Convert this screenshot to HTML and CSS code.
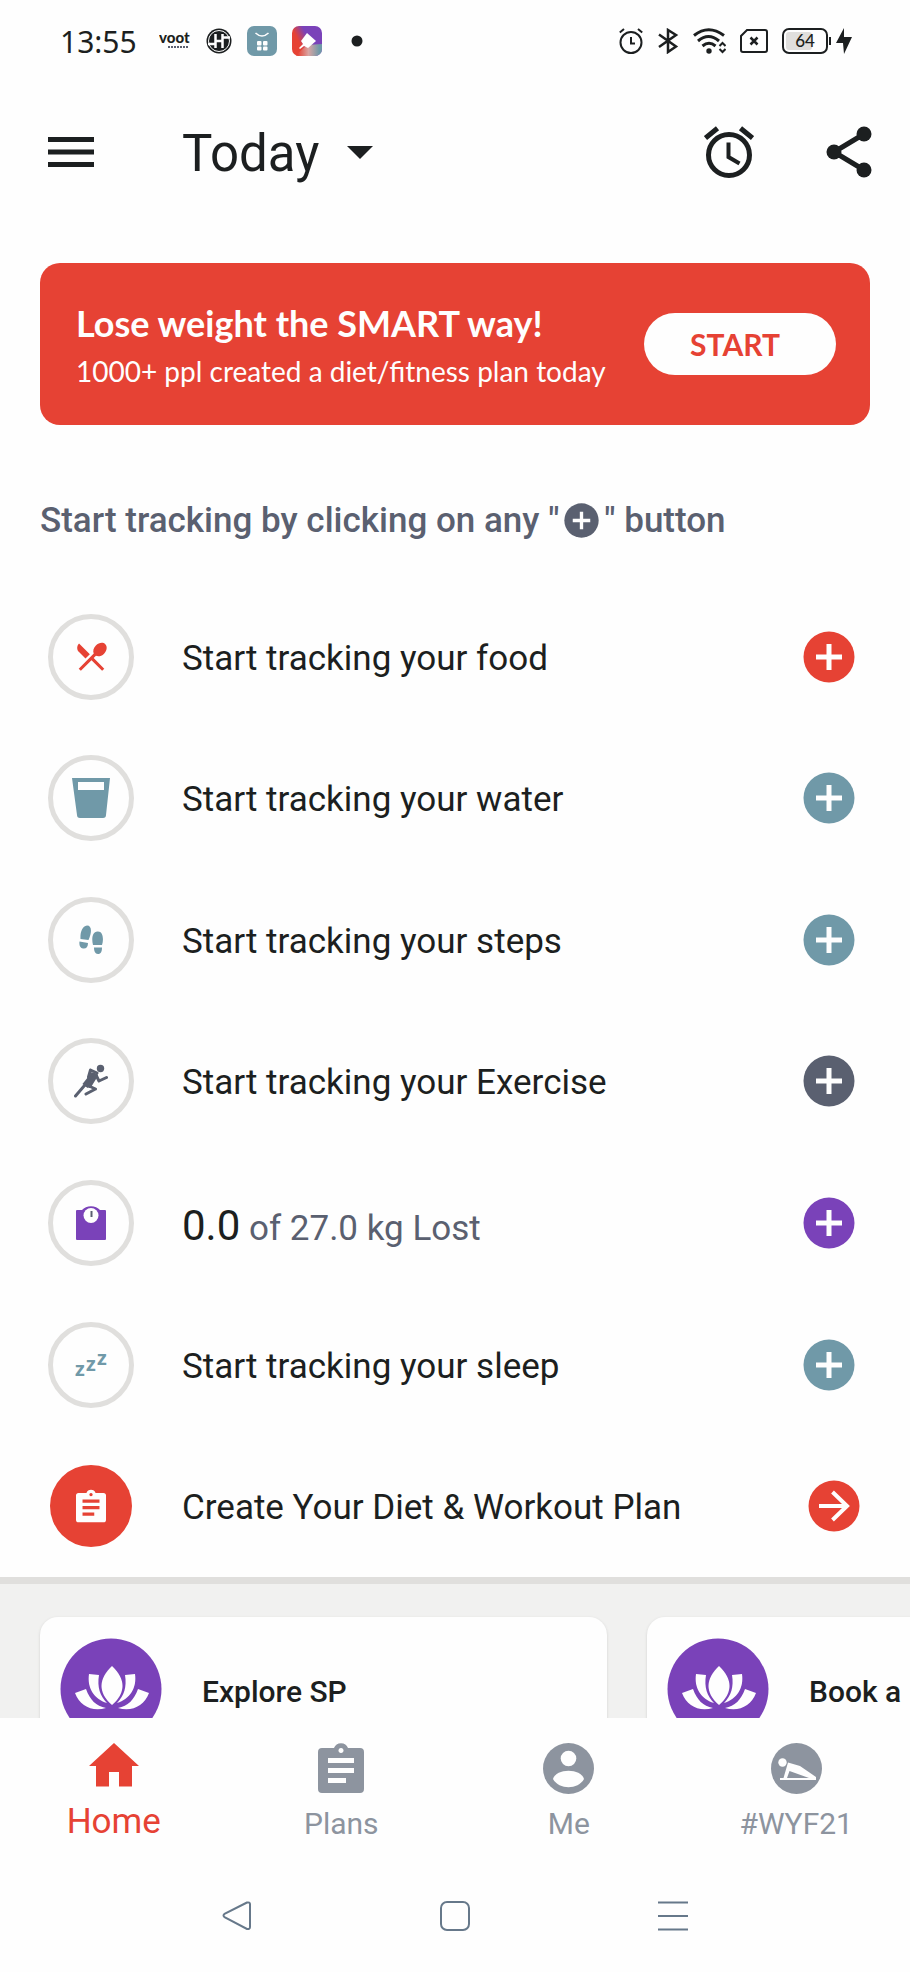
FILE: index.html
```html
<!DOCTYPE html>
<html lang="en">
<head>
<meta charset="utf-8">
<meta name="viewport" content="width=device-width, initial-scale=1">
<title>Today</title>
<link rel="stylesheet" href="styles.css">
</head>
<body>
<svg class="defs" aria-hidden="true">
  <symbol id="plus" viewBox="0 0 52 52">
    <circle cx="26" cy="26" r="25.5" fill="currentColor"/>
    <path d="M26 13v26M13 26h26" stroke="#fefefe" stroke-width="5"/>
  </symbol>
  <symbol id="lotus" viewBox="0 0 102 102">
    <circle cx="51" cy="51" r="50.5" fill="#7a42b9"/>
    <g fill="#fefefe">
      <path d="M52 28c14 13 14 27 0 39c-14-12-14-26 0-39z"/>
      <path d="M29 36l10 1c-2 12 1 21 8 28c-13-4-20-15-18-29z"/>
      <path d="M75 36l-10 1c2 12-1 21-8 28c13-4 20-15 18-29z"/>
      <path d="M15 55l11-4c4 11 10 17 20 19c-14 4-26-2-31-15z"/>
      <path d="M89 55l-11-4c-4 11-10 17-20 19c14 4 26-2 31-15z"/>
    </g>
  </symbol>
  <symbol id="clipboard" viewBox="0 0 46 50">
    <path fill="currentColor" fill-rule="evenodd" d="M4 5h12a7.500 7.500 0 0 1 14 0h12a4 4 0 0 1 4 4v37a4 4 0 0 1-4 4H4a4 4 0 0 1-4-4V9a4 4 0 0 1 4-4zM23 5a2.500 2.500 0 1 0 .01 0zM10 15v5h26v-5zM10 25v5h26v-5zM10 35v5h18v-5z"/>
  </symbol>
</svg>

<div class="screen">
  <div class="status">
    <span class="clock">13:55</span>
    <div class="notices">
      <svg width="32" height="28" viewBox="0 0 32 28"><text class="voot" x="0" y="16">voot</text><path d="M9 20h20" stroke="#5a6070" stroke-width="2" stroke-dasharray="2 1"/></svg>
      <svg width="26" height="26" viewBox="0 0 26 26"><circle cx="13" cy="13" r="12.500" fill="#1c1f20"/><circle cx="13" cy="13" r="10.500" fill="none" stroke="#fefefe"/><path d="M9.500 6v14M16.500 6v14M9.500 13h7M2 16h7.500M16.500 9.500H24" fill="none" stroke="#fefefe" stroke-width="2.500"/></svg>
      <svg width="30" height="30" viewBox="0 0 30 30"><rect width="30" height="30" rx="7" fill="#7099a8"/><path d="M8.500 7q6.500 6 13 0" fill="none" stroke="#fefefe" stroke-width="1.500"/><g fill="#fefefe"><rect x="10" y="15" width="4.500" height="4.500" rx="1"/><rect x="16" y="15" width="4.500" height="4.500" rx="1"/><rect x="10" y="20.500" width="4.500" height="4" rx="1"/><rect x="16" y="20.500" width="4.500" height="4" rx="1"/></g></svg>
      <svg width="30" height="30" viewBox="0 0 30 30">
        <defs>
          <linearGradient id="warm" x1="0" y1="0.700" x2="1" y2="0.200"><stop offset="0.250" stop-color="#e64234"/><stop offset="0.550" stop-color="#7a42b9"/></linearGradient>
          <linearGradient id="cool" x1="0" y1="0" x2="1" y2="0"><stop offset="0.100" stop-color="#e64234"/><stop offset="0.500" stop-color="#d9a5a3"/><stop offset="0.900" stop-color="#7099a8"/></linearGradient>
          <clipPath id="tile"><rect width="30" height="30" rx="7"/></clipPath>
        </defs>
        <g clip-path="url(#tile)"><path fill="url(#warm)" d="M0 0h30v30H0z"/><path fill="url(#cool)" d="M3 30l12-11 15-1v12z"/></g>
        <path fill="#fefefe" d="M15 7l9 8-8 7-4-2-4 3-1-1 4-4-2-3z"/></svg>
      <svg class="more" width="12" height="12" viewBox="0 0 12 12"><circle cx="6" cy="6" r="5.500" fill="#1c1f20"/></svg>
    </div>
    <div class="signals">
      <svg width="24" height="26" viewBox="0 0 24 26" fill="none" stroke="#1c1f20" stroke-width="2"><circle cx="12" cy="14.500" r="10.500"/><path d="M12 9v6.500h4M.8 4.500L5 1M23.200 4.500L19 1"/></svg>
      <svg width="22" height="26" viewBox="-1 0 22 26" fill="none" stroke="#1c1f20" stroke-width="2.500"><path d="M1 6.500l17 12-8 5.500V2l8 5-17 12"/></svg>
      <svg width="33" height="26" viewBox="0 0 33 26" fill="none" stroke="#1c1f20" stroke-width="3"><path d="M1 7.500q14.500-11.500 30 0M5 13q10.500-9 21 0M9.500 18q6.500-5.500 13 0"/><circle cx="16" cy="23" r="2.700" fill="#1c1f20" stroke="none"/><path d="M26.500 18l3-3 3 3M26.500 21l3 3 3-3" stroke-width="2"/></svg>
      <svg width="28" height="24" viewBox="0 0 28 24" fill="none" stroke="#1c1f20" stroke-width="2"><path d="M7 1h18a2 2 0 0 1 2 2v18a2 2 0 0 1-2 2H3a2 2 0 0 1-2-2V7z"/><path d="M10.500 8.500l7 7M17.500 8.500l-7 7" stroke-width="2.500"/></svg>
      <svg width="70" height="26" viewBox="0 0 70 26"><rect x="4" y="4" width="26" height="18" rx="3" fill="#e0dfdd"/><rect x="1" y="1" width="44" height="24" rx="6" fill="none" stroke="#1c1f20" stroke-width="2"/><path d="M48 9v8" stroke="#1c1f20" stroke-width="2"/><path d="M62 0l-8 15h7l1 11 8-17h-8z" fill="#1c1f20"/><text class="charge" x="23" y="19" text-anchor="middle">64</text></svg>
    </div>
  </div>

  <header class="appbar">
    <button class="icon-button" type="button" aria-label="Menu"><svg width="46" height="30" viewBox="0 0 46 30"><path d="M0 2.500h46M0 15h46M0 27.500h46" stroke="#1c1f20" stroke-width="5"/></svg></button>
    <button class="day" type="button"><span>Today</span><svg width="26" height="13" viewBox="0 0 26 13"><path d="M0 0h26L13 13z" fill="#1c1f20"/></svg></button>
    <button class="icon-button" type="button" aria-label="Reminders"><svg width="50" height="52" viewBox="0 0 50 52" fill="none" stroke="#1c1f20" stroke-width="5"><circle cx="25" cy="29" r="20.500"/><path d="M24.500 16.500V31l11 6.500" stroke-width="4"/><path d="M1.500 12L13.500 2.200M48.500 12L36.500 2.200"/></svg></button>
    <button class="icon-button" type="button" aria-label="Share"><svg width="46" height="52" viewBox="0 0 46 52"><path d="M38 8L8 26l30 18" fill="none" stroke="#1c1f20" stroke-width="5"/><g fill="#1c1f20"><circle cx="38" cy="8" r="7.500"/><circle cx="8" cy="26" r="7.500"/><circle cx="38" cy="44" r="7.500"/></g></svg></button>
  </header>

  <section class="banner">
    <div class="pitch">
      <h2>Lose weight the SMART way!</h2>
      <p>1000+ ppl created a diet/fitness plan today</p>
    </div>
    <button class="start" type="button">START</button>
  </section>

  <h1 class="hint">Start tracking by clicking on any "<svg width="35" height="35" role="img" aria-label="plus"><use href="#plus"/></svg>" button</h1>

  <ul class="trackers">
    <li class="tracker">
      <span class="ring"><svg width="37" height="37" viewBox="0 0 24 24"><path fill="#e64234" d="M8.100 13.340l2.830-2.830L3.910 3.500c-1.560 1.560-1.560 4.090 0 5.660l4.190 4.180zm6.780-1.810c1.530.71 3.680.21 5.270-1.380 1.910-1.910 2.280-4.650.81-6.120-1.460-1.460-4.200-1.100-6.120.81-1.590 1.590-2.090 3.740-1.380 5.270L3.700 19.870l1.410 1.410L12 14.410l6.880 6.880 1.410-1.410L13.410 13l1.470-1.470z"/></svg></span>
      <span class="label">Start tracking your food</span>
      <button class="add red" type="button" aria-label="Add food"><svg><use href="#plus"/></svg></button>
    </li>
    <li class="tracker">
      <span class="ring"><svg width="38" height="40" viewBox="0 0 38 40"><path fill="#7099a8" fill-rule="evenodd" d="M0 0h38l-4 37a3 3 0 0 1-3 3H8a3 3 0 0 1-3-3zM6 4v8h26V4z"/></svg></span>
      <span class="label">Start tracking your water</span>
      <button class="add teal" type="button" aria-label="Add water"><svg><use href="#plus"/></svg></button>
    </li>
    <li class="tracker">
      <span class="ring"><svg width="24" height="30" viewBox="0 0 24 30" fill="#7099a8"><path d="M1.500 14C1 8 3 1 8 .5c5 0 5 7 1.500 14.500zM.5 16.500l8.500 1.500c0 4-2 6-5 5.500S0 20 .5 16.500zM14 20c-1.500-6-1-13 4.500-13.500S25 14 23 20zM15 22.500h8c0 4-1 6.500-4 6.500s-4-3-4-6.500z"/></svg></span>
      <span class="label">Start tracking your steps</span>
      <button class="add teal" type="button" aria-label="Add steps"><svg><use href="#plus"/></svg></button>
    </li>
    <li class="tracker">
      <span class="ring"><svg width="34" height="34" viewBox="0 0 34 34" fill="none" stroke="#5a6070" stroke-width="3" stroke-linecap="round" stroke-linejoin="round"><circle cx="26.500" cy="4.500" r="3.700" fill="#5a6070" stroke="none"/><path d="M14.500 13l2-7 6.500 3M22 11l3 6 7.500-3.500M1.500 32l9-10.500M15 22l6.500 3-9.500 5"/><path d="M20.500 10L11 22" stroke-width="6.500" stroke-linecap="butt"/><path d="M20 9.500l3 2-7 11.500-5-2z" stroke-width="2" fill="#5a6070"/></svg></span>
      <span class="label">Start tracking your Exercise</span>
      <button class="add slate" type="button" aria-label="Add exercise"><svg><use href="#plus"/></svg></button>
    </li>
    <li class="tracker">
      <span class="ring"><svg width="30" height="34" viewBox="0 0 30 34"><path fill="#7a42b9" d="M1 4h5a11 9 0 0 1 18 0h5a1 1 0 0 1 1 1v28a1 1 0 0 1-1 1H1a1 1 0 0 1-1-1V5a1 1 0 0 1 1-1z"/><circle cx="15" cy="9.500" r="7.500" fill="#fefefe"/><path d="M15.500 5v6" stroke="#5a6070" stroke-width="2"/></svg></span>
      <span class="label"><strong>0.0</strong> of 27.0 kg Lost</span>
      <button class="add purple" type="button" aria-label="Add weight"><svg><use href="#plus"/></svg></button>
    </li>
    <li class="tracker">
      <span class="ring"><svg class="zzz" width="40" height="44" viewBox="0 0 40 44"><text x="4" y="33">z</text><text x="15" y="28">z</text><text x="26" y="22">z</text></svg></span>
      <span class="label">Start tracking your sleep</span>
      <button class="add teal" type="button" aria-label="Add sleep"><svg><use href="#plus"/></svg></button>
    </li>
    <li class="tracker">
      <span class="disc"><svg width="30" height="34"><use href="#clipboard"/></svg></span>
      <span class="label">Create Your Diet &amp; Workout Plan</span>
      <button class="add go" type="button" aria-label="Create plan"><svg viewBox="0 0 52 52"><circle cx="26" cy="26" r="25.500" fill="#e64234"/><path d="M11 26h27M24.500 12L39 26 24.500 40" fill="none" stroke="#fefefe" stroke-width="4"/></svg></button>
    </li>
  </ul>

  <section class="carousel">
    <a class="card" href="#explore"><svg><use href="#lotus"/></svg><span>Explore SP</span></a>
    <a class="card" href="#book"><svg><use href="#lotus"/></svg><span>Book a</span></a>
  </section>

  <nav class="tabs">
    <a class="tab active" href="#home"><svg width="50" height="44" viewBox="0 0 50 44"><path d="M25 0l25 23h-7v20.500H30V29H20v14.500H7V23H0z" fill="currentColor"/></svg><span>Home</span></a>
    <a class="tab" href="#plans"><svg width="46" height="50"><use href="#clipboard"/></svg><span>Plans</span></a>
    <a class="tab" href="#me"><svg width="51" height="51" viewBox="0 0 51 51"><circle cx="25.500" cy="25.500" r="25.500" fill="currentColor"/><g fill="#fefefe"><circle cx="25.500" cy="15.500" r="7.800"/><path d="M10 36c3-11 28-11 31 0c-6 11-25 11-31 0z"/></g></svg><span>Me</span></a>
    <a class="tab" href="#wyf21"><svg width="51" height="51" viewBox="0 0 51 51"><circle cx="25.500" cy="25.500" r="25.500" fill="currentColor"/><circle cx="11.500" cy="19.500" r="4.200" fill="#fefefe"/><path fill="#fefefe" fill-rule="evenodd" d="M17 19.500l12 3.500 16 11v3H9v-2h3.500zM18.500 28l-2.500 7h22z"/></svg><span>#WYF21</span></a>
  </nav>

  <div class="system">
    <button type="button" aria-label="Back"><svg width="30" height="30" viewBox="0 0 30 30"><path d="M25 1.500L3 12.500q-3 2 0 4L25 28q3 .5 3-2V3q0-2-3-1.500z"/></svg></button>
    <button type="button" aria-label="Home screen"><svg width="30" height="30" viewBox="0 0 30 30"><rect x="1" y="1" width="28" height="28" rx="6"/></svg></button>
    <button type="button" aria-label="Recent apps"><svg width="30" height="30" viewBox="0 0 30 30"><path d="M0 1.500h30M0 15h30M0 28.500h30"/></svg></button>
  </div>
</div>
</body>
</html>
```
FILE: styles.css
```css
* {
  box-sizing: border-box;
}

body {
  margin: 0;
  background: #fefefe;
  color: #1c1f20;
  font-family: Roboto, "Liberation Sans", sans-serif;
}

button {
  padding: 0;
  border: 0;
  background: none;
  color: inherit;
  font: inherit;
}

a {
  color: inherit;
  text-decoration: none;
}

svg {
  display: block;
  flex: none;
}

.defs {
  position: absolute;
  width: 0;
  height: 0;
}

.screen {
  display: flex;
  flex-direction: column;
  min-height: 100vh;
  overflow: hidden;
}

/* Status bar */
.status {
  display: flex;
  align-items: center;
  height: 82px;
  padding: 0 58px 0 60px;
}

.clock {
  font: 30px "Noto Sans", "Open Sans", sans-serif;
}

.notices {
  display: flex;
  align-items: center;
  gap: 15px;
  margin-left: 22px;
}

.more {
  margin-left: 14px;
}

.signals {
  display: flex;
  align-items: center;
  gap: 14px;
  margin-left: auto;
}

.voot {
  font: 900 15px Lato, sans-serif;
  fill: #1c1f20;
}

.charge {
  font: 500 17px Lato, sans-serif;
  fill: #1c1f20;
}

/* App bar */
.appbar {
  display: flex;
  align-items: center;
  height: 140px;
  padding: 0 38px 0 48px;
}

.day {
  display: flex;
  align-items: center;
  gap: 28px;
  margin: 0 auto 0 88px;
  font-size: 51px;
  line-height: 60px;
}

.day span {
  padding-top: 4px;
}

.icon-button + .icon-button {
  margin-left: 72px;
}

/* Promo banner */
.banner {
  display: flex;
  align-items: center;
  justify-content: space-between;
  min-height: 162px;
  margin: 41px 40px 0;
  padding: 0 34px 0 36px;
  border-radius: 20px;
  background: #e64234;
  color: #fefefe;
  font-family: Lato, sans-serif;
}

.pitch {
  padding-top: 6px;
}

.pitch h2 {
  margin: 0;
  font-size: 36px;
  font-weight: 700;
  line-height: 48px;
}

.pitch p {
  margin: 0;
  font-size: 28px;
  line-height: 48px;
}

.start {
  width: 192px;
  height: 62px;
  padding-right: 10px;
  border-radius: 31px;
  background: #fefefe;
  color: #e64234;
  font-size: 30px;
  font-weight: 700;
}

.hint {
  margin: 72px 40px 0;
  color: #5a6070;
  font-size: 35px;
  font-weight: 500;
  line-height: 48px;
}

.hint svg {
  display: inline-block;
  margin: 0 5px;
  vertical-align: -6px;
}

/* Tracker list */
.trackers {
  display: grid;
  flex: 1;
  grid-auto-rows: 1fr;
  margin: 41px 0 0;
  padding: 0 55px 0 48px;
  list-style: none;
}

.tracker {
  display: flex;
  align-items: center;
  min-height: 120px;
}

.ring,
.disc {
  display: flex;
  flex: none;
  align-items: center;
  justify-content: center;
  width: 86px;
  height: 86px;
  border: 5px solid #e0dfdd;
  border-radius: 50%;
}

.disc {
  width: 82px;
  height: 82px;
  margin: 0 2px;
  border: 0;
  background: #e64234;
  color: #fefefe;
}

.zzz text {
  font: 700 20px "Open Sans", sans-serif;
  fill: #7099a8;
}

.label {
  flex: 1;
  margin-left: 48px;
  padding-top: 4px;
  font-size: 35px;
  line-height: 48px;
}

.label:has(strong) {
  padding-top: 8px;
  color: #5a6070;
}

.label strong {
  color: #1c1f20;
  font-size: 42px;
  font-weight: 400;
}

.add svg {
  width: 52px;
  height: 52px;
}

.red {
  color: #e64234;
}

.teal {
  color: #7099a8;
}

.slate {
  color: #5a6070;
}

.purple {
  color: #7a42b9;
}

.go {
  margin-right: -5px;
}

/* Cards under the list */
.carousel {
  display: flex;
  gap: 40px;
  height: 141px;
  padding: 33px 0 0 40px;
  overflow: hidden;
  border-top: 7px solid #e0dfdd;
  background: #f1f1f0;
}

.card {
  display: flex;
  flex: none;
  align-items: center;
  gap: 40px;
  width: 567px;
  height: 144px;
  padding: 0 20px;
  border-radius: 18px;
  background: #fefefe;
  box-shadow: 0 1px 3px #d0d0ce;
  font-size: 30px;
  font-weight: 500;
}

.card span {
  padding-top: 4px;
}

.card svg {
  width: 102px;
  height: 102px;
}

/* Tab bar */
.tabs {
  display: grid;
  grid-template-columns: repeat(4, 1fr);
  height: 142px;
  background: #fefefe;
}

.tab {
  display: flex;
  flex-direction: column;
  align-items: center;
  justify-content: space-between;
  padding: 25px 0 16px;
  color: #8d949f;
  font-size: 30px;
  line-height: 40px;
}

.tab.active {
  padding-bottom: 18px;
  color: #e64234;
  font-size: 35px;
}

/* System navigation */
.system {
  display: flex;
  align-items: center;
  justify-content: center;
  gap: 188px;
  height: 112px;
}

.system svg {
  fill: none;
  stroke: #66788a;
  stroke-width: 2;
}
```
